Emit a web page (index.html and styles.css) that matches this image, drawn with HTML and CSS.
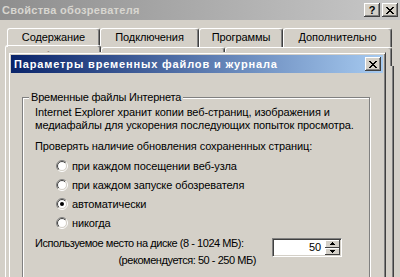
FILE: index.html
```html
<!DOCTYPE html>
<html lang="ru">
<head>
<meta charset="utf-8">
<title>Свойства обозревателя</title>
<link rel="stylesheet" href="styles.css">
</head>
<body>
<div class="bgwin">
  <div class="bg-title">
    <span class="bg-title-text">Свойства обозревателя</span>
    <div class="cap-btns">
      <div class="cap-btn help">?</div>
      <div class="cap-btn">
        <svg width="8" height="7" viewBox="0 0 8 7" shape-rendering="crispEdges"><path fill="#000" d="M0 0h2v1H0zM6 0h2v1H6zM1 1h2v1H1zM5 1h2v1H5zM2 2h4v1H2zM3 3h2v1H3zM2 4h4v1H2zM1 5h2v1H1zM5 5h2v1H5zM0 6h2v1H0zM6 6h2v1H6z"/></svg>
      </div>
    </div>
  </div>
  <div class="tabs row1">
    <div class="tab t1">Содержание</div>
    <div class="tab t2">Подключения</div>
    <div class="tab t3">Программы</div>
    <div class="tab t4">Дополнительно</div>
  </div>
  <div class="tabs row2">
    <div class="tab sel s1">Общие</div>
    <div class="tab s2">Безопасность</div>
    <div class="tab s3">Конфиденциальность</div>
  </div>
  <div class="pane"></div>
</div>

<div class="dialog">
  <div class="dlg-title">
    <span class="dlg-title-text">Параметры временных файлов и журнала</span>
    <div class="cap-btn close">
      <svg width="8" height="7" viewBox="0 0 8 7" shape-rendering="crispEdges"><path fill="#000" d="M0 0h2v1H0zM6 0h2v1H6zM1 1h2v1H1zM5 1h2v1H5zM2 2h4v1H2zM3 3h2v1H3zM2 4h4v1H2zM1 5h2v1H1zM5 5h2v1H5zM0 6h2v1H0zM6 6h2v1H6z"/></svg>
    </div>
  </div>
  <div class="dlg-body">
    <fieldset class="group">
      <legend>Временные файлы Интернета</legend>
      <p class="desc">Internet Explorer хранит копии веб-страниц, изображения и<br>медиафайлы для ускорения последующих попыток просмотра.</p>
      <p class="check">Проверять наличие обновления сохраненных страниц:</p>
      <div class="radios">
        <div class="radio"><svg class="rb" width="12" height="12" viewBox="0 0 12 12"><use href="#rb"/></svg><span>при каждом посещении веб-узла</span></div>
        <div class="radio"><svg class="rb" width="12" height="12" viewBox="0 0 12 12"><use href="#rb"/></svg><span>при каждом запуске обозревателя</span></div>
        <div class="radio"><svg class="rb" width="12" height="12" viewBox="0 0 12 12"><use href="#rb"/><circle cx="6" cy="6" r="2" fill="#000"/></svg><span>автоматически</span></div>
        <div class="radio"><svg class="rb" width="12" height="12" viewBox="0 0 12 12"><use href="#rb"/></svg><span>никогда</span></div>
      </div>
      <div class="disk">
        <div class="disk-text">
          <div class="disk-l1">Используемое место на диске (8 - 1024 МБ):</div>
          <div class="disk-l2">(рекомендуется: 50 - 250 МБ)</div>
        </div>
        <div class="spin">
          <div class="spin-val">50</div>
          <div class="spin-btns">
            <div class="sb"><svg width="5" height="3" viewBox="0 0 5 3" shape-rendering="crispEdges"><path d="M2 0h1v1h1v1h1v1H0V2h1V1h1z" fill="#000"/></svg></div>
            <div class="sb"><svg width="5" height="3" viewBox="0 0 5 3" shape-rendering="crispEdges"><path d="M0 0h5v1H4v1H3v1H2V2H1V1H0z" fill="#000"/></svg></div>
          </div>
        </div>
      </div>
    </fieldset>
  </div>
</div>

<svg width="0" height="0" class="defs">
  <defs>
    <linearGradient id="g1" x1="0" y1="0" x2="1" y2="1"><stop offset="0.5" stop-color="#808080"/><stop offset="0.5" stop-color="#ffffff"/></linearGradient>
    <linearGradient id="g2" x1="0" y1="0" x2="1" y2="1"><stop offset="0.5" stop-color="#404040"/><stop offset="0.5" stop-color="#d4d0c8"/></linearGradient>
    <g id="rb">
      <circle cx="6" cy="6" r="5.5" fill="none" stroke="url(#g1)" stroke-width="1"/>
      <circle cx="6" cy="6" r="4.5" fill="#fff" stroke="url(#g2)" stroke-width="1"/>
    </g>
  </defs>
</svg>
</body>
</html>
```
FILE: styles.css
```css
* { box-sizing: border-box; margin: 0; padding: 0; }

body {
  width: 400px;
  height: 277px;
  overflow: hidden;
  position: relative;
  background: #d4d0c8;
  font-family: "Liberation Sans", Arial, sans-serif;
  font-size: 11px;
  letter-spacing: -0.1px;
  color: #000;
}

.defs { position: absolute; }

/* background window */
.bgwin {
  width: 400px;
  height: 277px;
}

.bg-title {
  height: 20px;
  display: flex;
  align-items: center;
  justify-content: space-between;
  padding: 0 2px 0 2px;
  background: linear-gradient(to right, #8e8e8e, #c8c8c8);
  color: #d8d6d0;
  font-weight: bold;
}

.bg-title-text { letter-spacing: 0.3px; }

.cap-btns { display: flex; gap: 2px; }

.cap-btn {
  width: 16px;
  height: 14px;
  display: flex;
  align-items: center;
  justify-content: center;
  background: #d4d0c8;
  box-shadow: inset -1px -1px #404040, inset 1px 1px #fff, inset -2px -2px #808080;
  color: #000;
  font-weight: bold;
  font-size: 11px;
  line-height: 14px;
  letter-spacing: 0;
}

.tabs { display: flex; }

.row1 {
  margin-top: 8px;
  padding-left: 7px;
  height: 19px;
}

.tab {
  height: 19px;
  border: 1px solid;
  border-color: #fff #404040 transparent #fff;
  border-bottom: none;
  border-radius: 3px 3px 0 0;
  box-shadow: inset -1px 0 #808080;
  text-align: center;
  line-height: 17px;
  white-space: nowrap;
  overflow: hidden;
}

.t1 { width: 93px; }
.t2 { width: 99px; }
.t3 { width: 84px; }
.t4 { width: 109px; }

.row2 {
  margin-top: -2px;
  padding-left: 5px;
  height: 21px;
  align-items: flex-end;
}

.row2 .tab { line-height: 19px; }
.row2 .tab.sel { height: 21px; line-height: 21px; }
.s1 { width: 96px; }
.s2 { width: 124px; }
.s3 { width: 167px; }

.pane {
  margin-left: 5px;
  width: 389px;
  height: 220px;
  border-left: 1px solid #fff;
  border-right: 1px solid #404040;
  box-shadow: inset -1px 0 #808080;
}

/* foreground dialog */
.dialog {
  position: absolute;
  left: 8px;
  top: 52px;
  width: 378px;
  height: 240px;
  background: #d4d0c8;
  border: 1px solid;
  border-color: #d4d0c8 #404040 #404040 #d4d0c8;
  box-shadow: inset 1px 1px #fff, inset -1px -1px #808080;
  padding: 2px;
}

.dlg-title {
  height: 18px;
  display: flex;
  align-items: center;
  justify-content: space-between;
  padding: 0 2px 0 3px;
  background: linear-gradient(to right, #0a246a, #a6caf0);
  color: #fff;
  font-weight: bold;
}

.dlg-title-text { letter-spacing: 0.85px; }

.dlg-body {
  padding: 0 11px;
}

.group {
  margin-top: 18px;
  margin-left: 0;
  width: 348px;
  border: 1px solid #808080;
  box-shadow: inset 1px 1px #fff, 1px 1px #fff;
  padding: 2px 4px 20px 12px;
  white-space: nowrap;
}

.group legend {
  margin-left: -6px;
  padding: 0 2px;
  line-height: 13px;
  background: #d4d0c8;
  letter-spacing: -0.2px;
}

.desc { line-height: 13px; }

.check {
  margin-top: 8px;
  line-height: 13px;
}

.radios { margin-top: 3px; }

.radio {
  height: 19px;
  display: flex;
  align-items: center;
  gap: 4px;
  padding-left: 21px;
}

.rb { flex: none; }

.disk {
  margin-top: 5px;
  display: flex;
  align-items: flex-start;
}

.disk-text {
  width: 221px;
  line-height: 13px;
  letter-spacing: -0.45px;
}

.disk-l2 {
  margin-top: 4px;
  text-align: right;
}

.spin {
  margin-left: 16px;
  margin-top: 1px;
  width: 70px;
  height: 19px;
  display: flex;
  background: #fff;
  border: 1px solid;
  border-color: #808080 #fff #fff #808080;
  box-shadow: inset 1px 1px #404040, inset -1px -1px #d4d0c8;
  padding: 1px;
}

.spin-val {
  flex: 1;
  text-align: right;
  padding-right: 4px;
  line-height: 15px;
}

.spin-btns {
  width: 15px;
  display: flex;
  flex-direction: column;
}

.sb {
  flex: 1;
  display: flex;
  align-items: center;
  justify-content: center;
  background: #d4d0c8;
  box-shadow: inset -1px -1px #404040, inset 1px 1px #fff;
}
```
